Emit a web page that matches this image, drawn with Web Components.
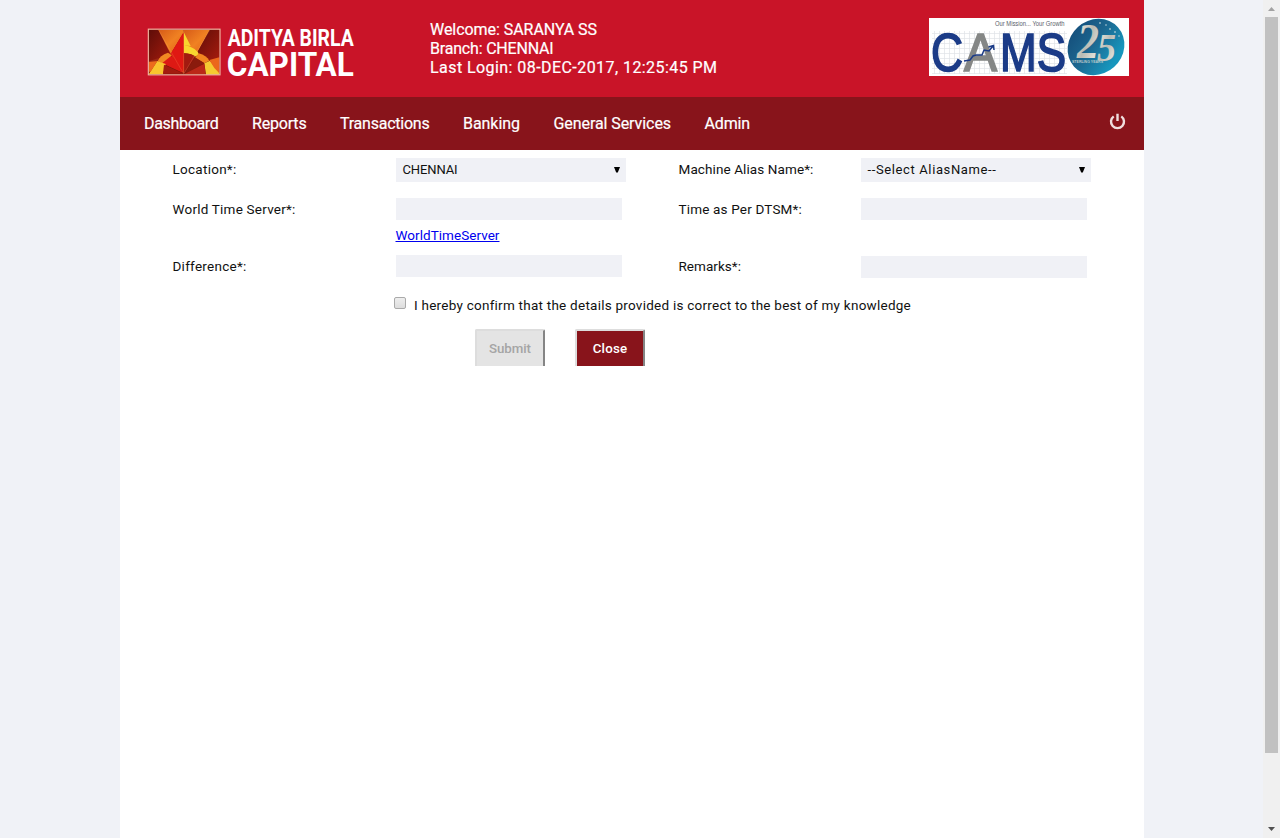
<!DOCTYPE html>
<html lang="en"><head><meta charset="utf-8"><title>Aditya Birla Capital</title>
<style>
html,body{margin:0;height:100%;overflow:hidden;background:#f0f2f7;font-family:Roboto,"Noto Sans",sans-serif}
</style></head><body>
<portal-app></portal-app>
<script>
const define=(name,html,ready)=>{
  const t=document.createElement('template');t.innerHTML=html;
  customElements.define(name,class extends HTMLElement{
    connectedCallback(){
      if(this.shadowRoot)return;
      this.attachShadow({mode:'open'}).append(t.content.cloneNode(true));
      if(ready)ready(this,this.shadowRoot);
    }
  });
};

/* One line of text, tracked to the width given in its "w" attribute. */
define('track-text','<style>:host{display:inline-block;white-space:pre}span{display:inline-block;text-decoration:var(--line,none)}</style><span><slot></slot></span>',(el,root)=>{
  const w=+el.getAttribute('w'),span=root.querySelector('span');
  const natural=span.getBoundingClientRect().width;
  if(w&&natural)span.style.letterSpacing=((w-natural)/el.textContent.length)+'px';
  el.style.width=w+'px';
});

define('birla-logo',`<style>:host{display:block;width:208px;height:50px}svg{display:block;overflow:visible}text{font-family:Roboto,sans-serif;font-weight:700;fill:#fff}</style>
<svg width="208" height="50" viewBox="147 28 208 50">
<defs><linearGradient id="o" x2="1" y2="1"><stop stop-color="#d65a18"/><stop offset=".5" stop-color="#f08122"/><stop offset="1" stop-color="#e05f16"/></linearGradient>
<linearGradient id="d" x2="1" y2="1"><stop stop-color="#5e0d08"/><stop offset="1" stop-color="#a81c0e"/></linearGradient></defs>
<g transform="translate(146 26) scale(.33333)">
<rect x="7" y="10" width="214" height="137" fill="#7d130a"/>
<path d="M8 12H38L74 82L48 100L8 108Z" fill="url(#d)"/>
<path d="M37 12H113V20L74 84Z" fill="url(#o)"/>
<path d="M113 12H191L151 86L114 80Z" fill="url(#o)"/>
<path d="M191 12H220V108L180 100L151 84Z" fill="url(#d)"/>
<path d="M113 18L74 84Q92 78 113 82Z" fill="#dc1512"/>
<path d="M113 38V82Q136 82 146 92L159 86Q154 66 113 56Z" fill="#f9d62e"/>
<path d="M113 18V58L134 60Z" fill="#f9d62e"/>
<path d="M74 84L113 142L113 82Q92 76 74 84Z" fill="#e98920"/>
<path d="M70 88Q92 94 110 140L45 110Q52 94 70 88Z" fill="#dd1914"/>
<path d="M66 80Q41 88 35 106L48 112L78 88Z" fill="#f18a22"/>
<path d="M113 82Q138 82 147 93L114 144Z" fill="#a31a10"/>
<path d="M158 82Q182 89 190 104L175 112L147 95Z" fill="#f28620"/>
<path d="M147 94L176 112L115 144Z" fill="#8a1b0d"/>
<path d="M8 106L38 96L32 114L8 136Z" fill="#9b2914"/>
<path d="M8 145L34 105L59 114L51 145Z" fill="#f9c52e"/>
<path d="M8 108L34 105L14 137H8Z" fill="#ec6c1c"/>
<path d="M54 116L113 143H51Z" fill="#a31c0f"/>
<path d="M175 112L192 104L220 140V146H180Z" fill="#f5ca31"/>
<path d="M190 102L220 94V142L205 126Z" fill="#eb671c"/>
<path d="M115 144L175 113L179 146Z" fill="#bb2818"/>
<path d="M74 84L113 20V142Z" fill="#e01813"/>
<path d="M38 12L113 144L191 12M113 14V142" fill="none" stroke="#ffc273" stroke-width="1" opacity=".55"/>
<rect x="7" y="9.500" width="215" height="137" fill="none" stroke="#efb6a2" stroke-width="3.500"/></g>
<text x="227.700" y="46" font-size="23.500" textLength="126" lengthAdjust="spacingAndGlyphs">ADITYA BIRLA</text>
<text x="226.800" y="75.800" font-size="34" textLength="127" lengthAdjust="spacingAndGlyphs">CAPITAL</text></svg>`);

define('cams-logo',`<style>:host{display:block;width:200px;height:58px}svg{display:block;overflow:visible}</style>
<svg width="200" height="58"><defs><pattern id="g" width="5" height="5" patternUnits="userSpaceOnUse"><path d="M0 .5H5M.5 0V5" stroke="#e0e2e7" stroke-width=".7"/></pattern>
<linearGradient id="b" x2=".25" y2="1"><stop stop-color="#144c79"/><stop offset=".5" stop-color="#1c668f"/><stop offset="1" stop-color="#1796bd"/></linearGradient>
<linearGradient id="s" x2="1" y2="1"><stop stop-color="#fffdf2"/><stop offset=".5" stop-color="#b9bbb4"/><stop offset="1" stop-color="#fffdf5"/></linearGradient></defs>
<rect width="200" height="58" fill="#fff"/><rect x="3" y="13" width="135" height="43" fill="url(#g)"/>
<text x="66" y="8" font-family="Liberation Sans" font-size="6.800" fill="#59606b" textLength="69.500" lengthAdjust="spacingAndGlyphs">Our Mission... Your Growth</text>
<g font-family="Liberation Sans" font-size="53" fill="#1b3b87" stroke="#1b3b87" stroke-width="1.700"><text x="2" y="53" textLength="32" lengthAdjust="spacingAndGlyphs">C</text><text x="35" y="53" fill="#858786" stroke="#858786" textLength="33" lengthAdjust="spacingAndGlyphs">A</text><text x="71" y="53" textLength="66" lengthAdjust="spacingAndGlyphs">MS</text></g>
<path d="M35 43L41 42L44 38L47 37H53L55 32L60 33L64 28M59.500 29L64.500 27.500L65 32" fill="none" stroke="#1b3b87" stroke-width="1.500"/>
<ellipse cx="167" cy="29" rx="29.500" ry="27" transform="rotate(-42 167 29)" fill="url(#b)"/>
<g fill="url(#s)" font-family="Liberation Serif" font-weight="700" font-style="italic"><text x="148" y="40" font-size="51" textLength="22" lengthAdjust="spacingAndGlyphs">2</text><text x="168" y="43" font-size="41" textLength="19" lengthAdjust="spacingAndGlyphs">5</text></g>
<text x="143" y="45" font-family="Liberation Sans" font-weight="700" font-size="4" fill="#b9caca" textLength="31" lengthAdjust="spacingAndGlyphs">STERLING YEARS</text>
<g fill="#e4ece9"><circle cx="171" cy="5" r=".8"/><circle cx="177" cy="7" r=".7"/><circle cx="181" cy="11" r=".8"/><circle cx="186" cy="14" r=".8"/><circle cx="190" cy="18" r=".7"/></g></svg>`);

define('portal-header',`<style>:host{display:flex;height:97px;box-sizing:border-box;padding:18px 15px 0 27px;background:#c91428;color:#fff;font-size:16px;line-height:19px}
birla-logo{margin-top:10px}.who{margin:2px 0 0 75px;flex:1;display:flex;flex-direction:column;-webkit-text-stroke:.2px}</style>
<birla-logo></birla-logo><div class="who"><track-text w="167">Welcome: SARANYA SS</track-text><track-text w="123.500">Branch: CHENNAI</track-text><track-text w="287.500">Last Login: 08-DEC-2017, 12:25:45 PM</track-text></div><cams-logo></cams-logo>`);

define('portal-nav',`<style>:host{display:flex;align-items:center;height:53px;box-sizing:border-box;padding:0 18px 0 24px;background:#88141b;color:#fff;font-size:16px;-webkit-text-stroke:.2px}
nav{display:flex;gap:33.500px;flex:1}svg{display:block;margin-top:-4px}</style>
<nav><track-text w="74.500">Dashboard</track-text><track-text w="54.500">Reports</track-text><track-text w="89.500">Transactions</track-text><track-text w="57">Banking</track-text><track-text w="117.500">General Services</track-text><track-text w="45.500">Admin</track-text></nav>
<svg width="17" height="18" viewBox="0 0 17 18"><path d="M4.700 3.400A6.500 6.500 0 1 0 12.300 3.400M8.500 .7V8" fill="none" stroke="#f0dede" stroke-width="2.400"/></svg>`);

define('field-row',`<style>:host{display:grid;grid-template-columns:223.500px 282.500px 182.500px 230px;padding-left:52.500px;align-items:start;font-size:13.500px;line-height:24px;color:#111}</style><slot></slot>`);
define('text-field',`<style>:host{display:block;width:226px;height:22px;background:#f0f1f6}</style>`);
define('pick-list',`<style>:host{display:flex;align-items:center;justify-content:space-between;width:230px;height:24px;box-sizing:border-box;padding:0 6px 0 6.500px;background:#f0f1f6;font-size:13px;color:#111}svg{display:block;margin-top:-2px}</style><slot></slot><svg width="6" height="7"><path d="M0 1H6L3.800 6.500H2.200Z" fill="#000"/></svg>`);
define('check-box',`<style>:host{display:block;box-sizing:border-box;width:12px;height:12px;border:1px solid #aaa;border-radius:2px;background:linear-gradient(#eee,#ddd)}</style>`);
define('push-button',`<style>:host{display:flex;align-items:center;justify-content:center;box-sizing:border-box;width:70px;height:37px;border:2px solid #ddd;border-right-color:#858585;border-bottom:0;border-radius:2px 2px 0 0;background:#88141b;color:#fff;font-size:13.300px;font-weight:500}
:host([disabled]){background:#e4e4e4;color:#a5a5a5}</style><slot></slot>`);

define('time-form',`<style>:host{display:block;padding-top:8px}field-row track-text{margin-top:-1px}.b{margin-top:16px}pick-list track-text{margin-top:0}.c{margin-top:9px}.r{margin-top:1px}
field-row{height:24px}
a{display:block;--line:underline;margin:3px 0 0 275.500px;width:104px;color:#0000ee;font-size:13.500px;line-height:20px;height:21px}
.confirm{display:flex;gap:8px;margin:18px 0 0 274px;font-size:13.500px;line-height:16px;height:18px;color:#111}.actions{display:flex;gap:30px;margin:14px 0 0 355px}</style>
<field-row><track-text w="64">Location*:</track-text><pick-list><track-text w="55">CHENNAI</track-text></pick-list><track-text w="135">Machine Alias Name*:</track-text><pick-list><track-text w="129">--Select AliasName--</track-text></pick-list></field-row>
<field-row class="b"><track-text w="123">World Time Server*:</track-text><text-field></text-field><track-text w="123.500">Time as Per DTSM*:</track-text><text-field></text-field></field-row>
<a><track-text w="104">WorldTimeServer</track-text></a>
<field-row class="c"><track-text w="74">Difference*:</track-text><text-field></text-field><track-text w="62.500">Remarks*:</track-text><text-field class="r"></text-field></field-row>
<div class="confirm"><check-box></check-box><track-text w="496.500">I hereby confirm that the details provided is correct to the best of my knowledge</track-text></div>
<div class="actions"><push-button disabled><track-text w="42">Submit</track-text></push-button><push-button><track-text w="34.500">Close</track-text></push-button></div>`);

define('scroll-rail',`<style>:host{display:flex;flex-direction:column;align-items:center;justify-content:space-between;width:17px;height:100%;background:#f0f0f0}i{display:block;width:13px;height:736px;background:#c1c1c1;margin-bottom:68px}svg{display:block;height:17px}</style>
<svg width="17" height="17"><path d="M5 11H12L8.500 7Z" fill="#a2a2a2"/></svg><i></i><svg width="17" height="17"><path d="M5 6H12L8.500 10Z" fill="#505050"/></svg>`);

define('portal-app',`<style>:host{display:flex;justify-content:space-between;height:838px;background:#f0f2f7}main{width:1024px;margin-left:120px;background:#fff}</style>
<main><portal-header></portal-header><portal-nav></portal-nav><time-form></time-form></main><scroll-rail></scroll-rail>`);
</script></body></html>
